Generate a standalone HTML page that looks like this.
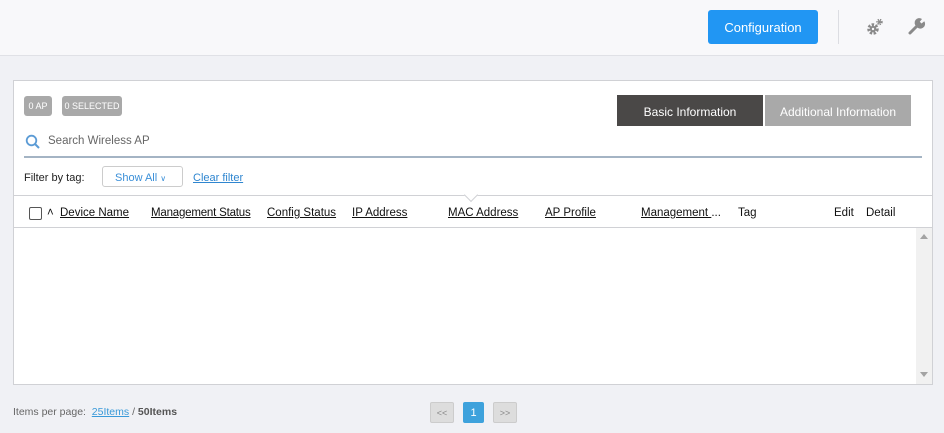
<!DOCTYPE html>
<html><head><style>
*{margin:0;padding:0;box-sizing:border-box}
body{width:944px;height:433px;background:#f0f1f5;font-family:"Liberation Sans",sans-serif;position:relative;overflow:hidden;color:#222}
.a{position:absolute;white-space:nowrap}
.u{text-decoration:underline}
</style></head><body>
<div class="a" style="left:0;top:0;width:944px;height:56px;background:#f8f8fa;border-bottom:1px solid #e0e1e6"></div>
<div class="a" style="left:708px;top:10px;width:110px;height:34px;background:#2196f3;border-radius:3px;color:#fff;font-size:13px;line-height:36px;text-align:center">Configuration</div>
<div class="a" style="left:838px;top:10px;width:1px;height:34px;background:#dcdde2"></div>
<svg class="a" style="left:864px;top:16px" width="22" height="22" viewBox="0 0 22 22">
<circle cx="9" cy="13" r="4" fill="none" stroke="#8a8a8a" stroke-width="3.5" stroke-dasharray="2.2 1.3"/>
<circle cx="9" cy="13" r="3.2" fill="#8a8a8a"/><circle cx="9" cy="13" r="1.2" fill="#f8f8fa"/>
<circle cx="15.5" cy="6" r="2.2" fill="none" stroke="#8a8a8a" stroke-width="2" stroke-dasharray="1.2 0.9"/>
<circle cx="15.5" cy="6" r="1.5" fill="#8a8a8a"/></svg>
<svg class="a" style="left:907px;top:16px" width="20" height="20" viewBox="0 0 20 20"><path d="M3 17 L10.5 9.5" stroke="#8a8a8a" stroke-width="3" stroke-linecap="round"/><path d="M9.5 10.5 A4.5 4.5 0 0 1 15 3 L12.8 5.8 L14.5 7.5 L17.3 5.3 A4.5 4.5 0 0 1 9.5 10.5 Z" fill="#8a8a8a"/></svg>

<div class="a" style="left:13px;top:80px;width:920px;height:305px;background:#fff;border:1px solid #d0d1d5"></div>
<div class="a" style="left:24px;top:96px;width:28px;height:20px;background:#a9a9a9;border-radius:3px;color:#fff;font-size:9px;line-height:21px;text-align:center">0 AP</div>
<div class="a" style="left:62px;top:96px;width:60px;height:20px;background:#a9a9a9;border-radius:3px;color:#fff;font-size:9px;line-height:21px;text-align:center">0 SELECTED</div>
<div class="a" style="left:617px;top:95px;width:146px;height:31px;background:#4a4847;color:#fff;font-size:12px;line-height:34px;text-align:center">Basic Information</div>
<div class="a" style="left:765px;top:95px;width:146px;height:31px;background:#a9a9a9;color:#fff;font-size:12px;line-height:34px;text-align:center">Additional Information</div>
<svg class="a" style="left:25px;top:134px" width="16" height="16" viewBox="0 0 16 16"><circle cx="6.5" cy="6.5" r="4.8" fill="none" stroke="#5b9bd5" stroke-width="1.8"/><path d="M10 10 L14 14" stroke="#5b9bd5" stroke-width="2"/></svg>
<div class="a" style="left:48px;top:135px;font-size:11.5px;color:#666">Search Wireless AP</div>
<div class="a" style="left:24px;top:156px;width:898px;height:2px;background:#a4b4c4"></div>
<div class="a" style="left:24px;top:172px;font-size:11px;color:#222">Filter by tag:</div>
<div class="a" style="left:102px;top:166px;width:81px;height:21px;border:1px solid #ccc;border-radius:3px;font-size:11px;color:#3a8fd8;line-height:22px;padding-left:12px">Show All <span style="font-size:8px">&#8744;</span></div>
<div class="a u" style="left:193px;top:172px;font-size:11px;color:#2f86d0">Clear filter</div>
<div class="a" style="left:14px;top:195px;width:918px;height:1px;background:#d0d1d5"></div>
<div class="a" style="left:466px;top:190px;width:10px;height:10px;background:#fff;border-right:1px solid #d0d1d5;border-bottom:1px solid #d0d1d5;transform:rotate(45deg)"></div>
<div class="a" style="left:14px;top:227px;width:918px;height:1px;background:#d0d1d5"></div>
<div class="a" style="left:29px;top:207px;width:13px;height:13px;border:1px solid #555;border-radius:2px"></div>
<div style="font-size:11.5px;color:#111">
<div class="a" style="left:47px;top:207px">&#708;</div>
<div class="a u" style="left:60px;top:207px">Device Name</div>
<div class="a u" style="left:151px;top:207px;letter-spacing:-0.2px">Management Status</div>
<div class="a u" style="left:267px;top:207px">Config Status</div>
<div class="a u" style="left:352px;top:207px">IP Address</div>
<div class="a u" style="left:448px;top:207px">MAC Address</div>
<div class="a u" style="left:545px;top:207px">AP Profile</div>
<div class="a" style="left:641px;top:207px"><span class="u">Management </span>...</div>
<div class="a" style="left:738px;top:207px">Tag</div>
<div class="a" style="left:834px;top:207px">Edit</div>
<div class="a" style="left:866px;top:207px">Detail</div>
</div>
<div class="a" style="left:916px;top:228px;width:16px;height:156px;background:#f1f1f1"></div>
<div class="a" style="left:920px;top:234px;width:0;height:0;border-left:4px solid transparent;border-right:4px solid transparent;border-bottom:5px solid #a3a3a3"></div>
<div class="a" style="left:920px;top:372px;width:0;height:0;border-left:4px solid transparent;border-right:4px solid transparent;border-top:5px solid #a3a3a3"></div>

<div class="a" style="left:13px;top:406px;font-size:10.5px;color:#666">Items per page: &nbsp;<span class="u" style="color:#3a9ad9">25Items</span> / <b style="color:#555">50Items</b></div>
<div class="a" style="left:430px;top:402px;width:24px;height:21px;background:#ddd;border:1px solid #ccc;border-radius:2px;font-size:9px;color:#888;text-align:center;line-height:20px">&lt;&lt;</div>
<div class="a" style="left:463px;top:402px;width:21px;height:21px;background:#3ea2dc;border-radius:2px;font-size:11px;color:#fff;text-align:center;line-height:22px">1</div>
<div class="a" style="left:493px;top:402px;width:24px;height:21px;background:#ddd;border:1px solid #ccc;border-radius:2px;font-size:9px;color:#888;text-align:center;line-height:20px">&gt;&gt;</div>
</body></html>
